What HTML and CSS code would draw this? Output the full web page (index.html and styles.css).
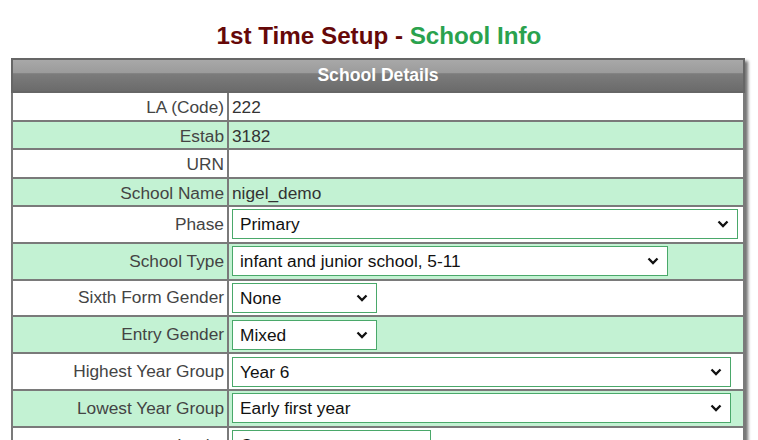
FILE: index.html
```html
<!DOCTYPE html>
<html>
<head>
<meta charset="utf-8">
<title>1st Time Setup - School Info</title>
<link rel="stylesheet" href="styles.css">
</head>
<body>
<h1 class="title"><span class="title-main">1st Time Setup - </span><span class="title-accent">School Info</span></h1>
<table class="details">
  <colgroup><col class="col-label"><col class="col-value"></colgroup>
  <thead>
    <tr><th colspan="2" class="details-head">School Details</th></tr>
  </thead>
  <tbody>
    <tr class="row-text"><td class="label">LA (Code)</td><td class="value">222</td></tr>
    <tr class="row-text alt"><td class="label">Estab</td><td class="value">3182</td></tr>
    <tr class="row-text"><td class="label">URN</td><td class="value"></td></tr>
    <tr class="row-text alt"><td class="label">School Name</td><td class="value">nigel_demo</td></tr>
    <tr class="row-field"><td class="label">Phase</td><td class="value"><span class="sel-wrap"><select class="sel sel-phase"><option>Primary</option></select><svg class="chev" viewBox="0 0 12 8" width="12" height="8"><path d="M1.5 1.5 L6 6 L10.5 1.5" fill="none" stroke="#111" stroke-width="2.3"/></svg></span></td></tr>
    <tr class="row-field alt"><td class="label">School Type</td><td class="value"><span class="sel-wrap"><select class="sel sel-type"><option>infant and junior school, 5-11</option></select><svg class="chev" viewBox="0 0 12 8" width="12" height="8"><path d="M1.5 1.5 L6 6 L10.5 1.5" fill="none" stroke="#111" stroke-width="2.3"/></svg></span></td></tr>
    <tr class="row-field"><td class="label">Sixth Form Gender</td><td class="value"><span class="sel-wrap"><select class="sel sel-small"><option>None</option></select><svg class="chev" viewBox="0 0 12 8" width="12" height="8"><path d="M1.5 1.5 L6 6 L10.5 1.5" fill="none" stroke="#111" stroke-width="2.3"/></svg></span></td></tr>
    <tr class="row-field alt"><td class="label">Entry Gender</td><td class="value"><span class="sel-wrap"><select class="sel sel-small"><option>Mixed</option></select><svg class="chev" viewBox="0 0 12 8" width="12" height="8"><path d="M1.5 1.5 L6 6 L10.5 1.5" fill="none" stroke="#111" stroke-width="2.3"/></svg></span></td></tr>
    <tr class="row-field"><td class="label">Highest Year Group</td><td class="value"><span class="sel-wrap"><select class="sel sel-year"><option>Year 6</option></select><svg class="chev" viewBox="0 0 12 8" width="12" height="8"><path d="M1.5 1.5 L6 6 L10.5 1.5" fill="none" stroke="#111" stroke-width="2.3"/></svg></span></td></tr>
    <tr class="row-field alt"><td class="label">Lowest Year Group</td><td class="value"><span class="sel-wrap"><select class="sel sel-year"><option>Early first year</option></select><svg class="chev" viewBox="0 0 12 8" width="12" height="8"><path d="M1.5 1.5 L6 6 L10.5 1.5" fill="none" stroke="#111" stroke-width="2.3"/></svg></span></td></tr>
    <tr class="row-field"><td class="label">Intake</td><td class="value"><span class="sel-wrap"><select class="sel sel-intake"><option>Current year</option></select><svg class="chev" viewBox="0 0 12 8" width="12" height="8"><path d="M1.5 1.5 L6 6 L10.5 1.5" fill="none" stroke="#111" stroke-width="2.3"/></svg></span></td></tr>
  </tbody>
</table>
</body>
</html>
```
FILE: styles.css
```css
html, body {
  margin: 0;
  padding: 0;
  background: #ffffff;
}
body {
  font-family: "Liberation Sans", Arial, sans-serif;
  color: #333;
}
.title {
  margin: 23px 0 9px;
  text-align: center;
  font-size: 24.2px;
  line-height: 26px;
  font-weight: bold;
}
.title-main { color: #660808; }
.title-accent { color: #2aa24e; }

.details {
  margin-left: 11px;
  width: 734px;
  border-collapse: collapse;
  table-layout: fixed;
  border: 2px solid #7a7a7a;
  box-shadow: 3px 3px 3px rgba(0,0,0,0.55);
  font-size: 17.3px;
}
.col-label { width: 216px; }
.details-head {
  height: 31px;
  padding: 0;
  border: 2px solid #666;
  background: linear-gradient(to bottom, #a8a8a8 0%, #9b9b9b 42%, #7c7c7c 44%, #6b6b6b 100%);
  color: #fff;
  font-weight: bold;
  font-size: 17.6px;
  text-align: center;
}
.details td {
  border: 2px solid #7a7a7a;
  background: #fff;
}
.details .alt td { background: #c3f2d3; }
.label {
  text-align: right;
  color: #444;
  padding: 0 3px;
}
.value {
  color: #333;
  padding: 0 3px;
}
.row-text td {
  height: 24.5px;
  padding-top: 2px;
  padding-bottom: 0;
  line-height: 20px;
}
.row-field td {
  height: 34.8px;
  padding-top: 0;
  padding-bottom: 0;
}
.sel-wrap {
  position: relative;
  display: inline-block;
  vertical-align: middle;
}
.sel {
  display: block;
  height: 30px;
  font-family: "Liberation Sans", Arial, sans-serif;
  font-size: 17.3px;
  color: #111;
  background-color: #fff;
  border: 1px solid #4aa86a;
  border-radius: 0;
  padding: 0 28px 0 7px;
  margin: 0;
  appearance: none;
  -webkit-appearance: none;
}
.chev {
  position: absolute;
  right: 9px;
  top: 11px;
  pointer-events: none;
}
.sel-phase { width: 506px; }
.sel-type { width: 436px; }
.sel-small { width: 145px; }
.sel-year { width: 499px; }
.sel-intake { width: 199px; }
```
